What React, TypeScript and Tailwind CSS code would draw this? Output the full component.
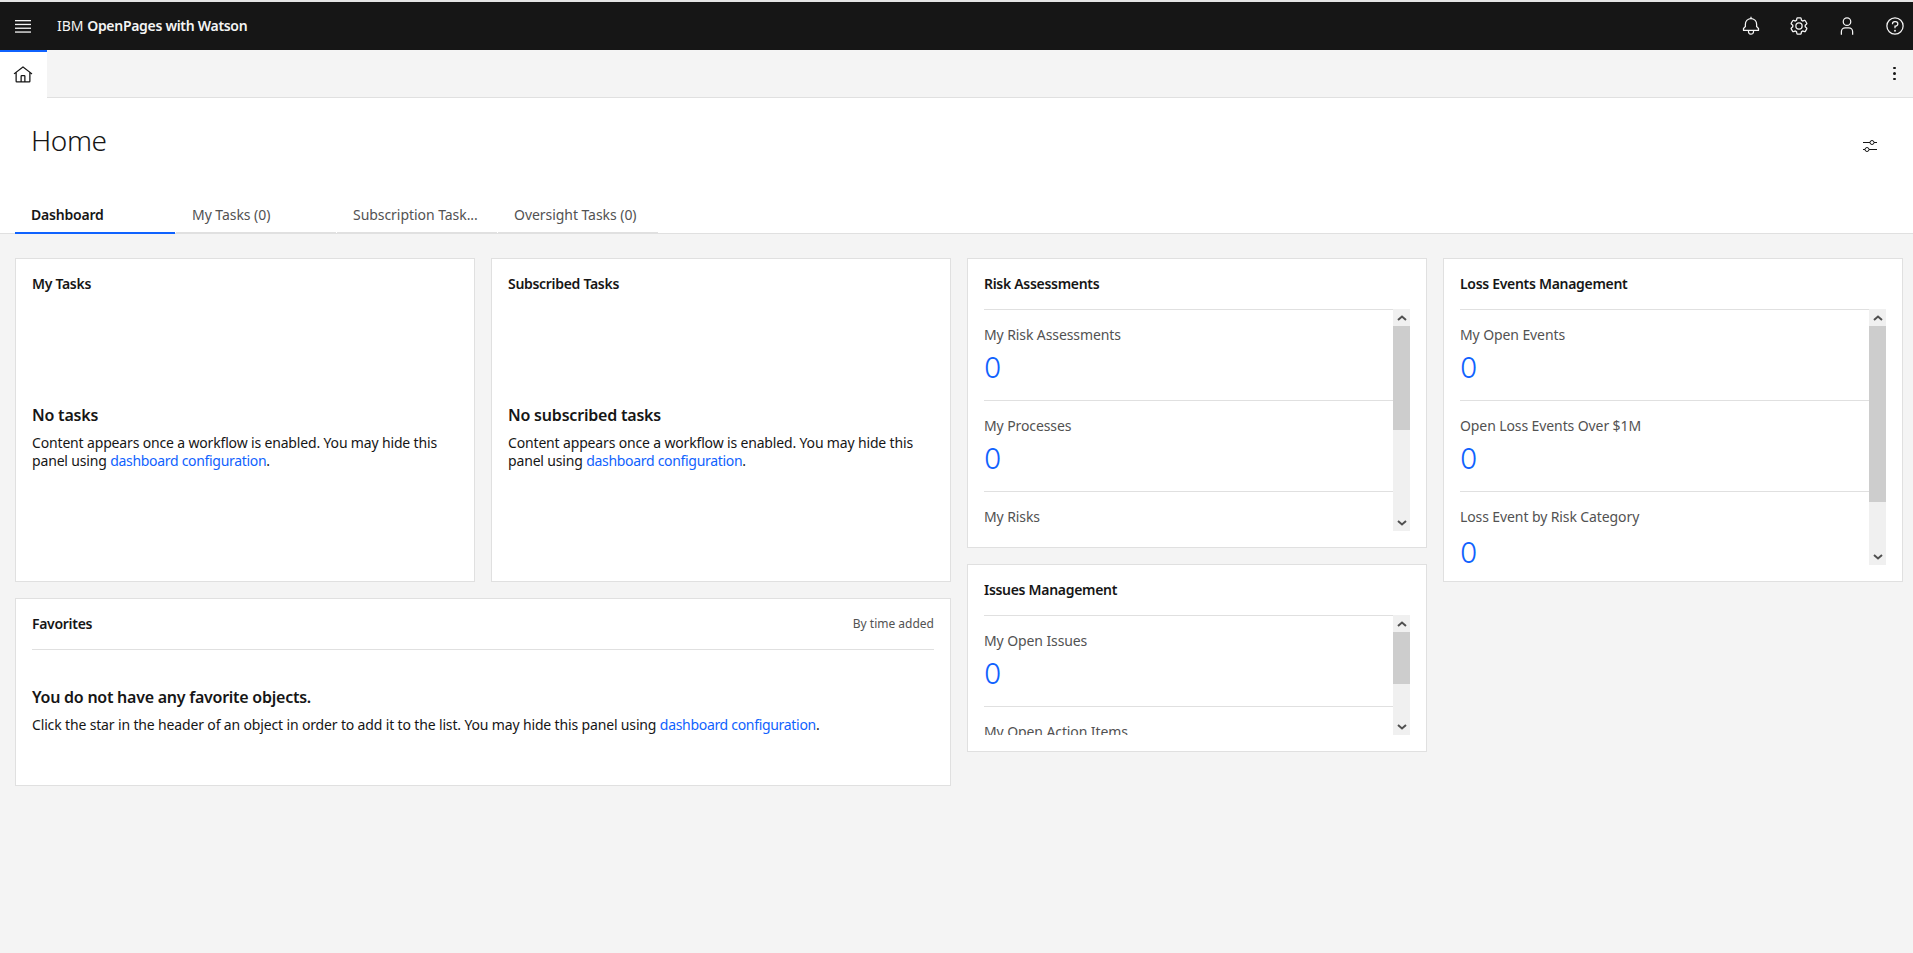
const notificationPath =
  'M28.7071,19.293,26,16.5859V13a10.0136,10.0136,0,0,0-9-9.9492V1H15V3.0508A10.0136,10.0136,0,0,0,6,13v3.5859L3.2929,19.293A1,1,0,0,0,3,20v3a1,1,0,0,0,1,1h7v.7768a5.152,5.152,0,0,0,4.5,5.1987A5.0057,5.0057,0,0,0,21,25V24h7a1,1,0,0,0,1-1V20A1,1,0,0,0,28.7071,19.293ZM19,25a3,3,0,0,1-6,0V24h6Zm8-3H5V20.4141L7.707,17.707A1,1,0,0,0,8,17V13a8,8,0,0,1,16,0v4a1,1,0,0,0,.293.707L27,20.4141Z';
const settingsPaths = [
  'M27,16.76c0-.25,0-.5,0-.76s0-.51,0-.77l1.92-1.68A2,2,0,0,0,29.3,11L26.94,7a2,2,0,0,0-1.73-1,2,2,0,0,0-.64.1l-2.43.82a11.35,11.35,0,0,0-1.31-.75l-.51-2.52a2,2,0,0,0-2-1.61H13.64a2,2,0,0,0-2,1.61l-.51,2.52a11.48,11.48,0,0,0-1.32.75L7.43,6.06A2,2,0,0,0,6.79,6,2,2,0,0,0,5.06,7L2.7,11a2,2,0,0,0,.41,2.51L5,15.24c0,.25,0,.5,0,.76s0,.51,0,.77L3.11,18.45A2,2,0,0,0,2.7,21L5.06,25a2,2,0,0,0,1.73,1,2,2,0,0,0,.64-.1l2.43-.82a11.35,11.35,0,0,0,1.31.75l.51,2.52a2,2,0,0,0,2,1.61h4.72a2,2,0,0,0,2-1.61l.51-2.52a11.48,11.48,0,0,0,1.32-.75l2.42.82a2,2,0,0,0,.64.1,2,2,0,0,0,1.73-1L29.3,21a2,2,0,0,0-.41-2.51ZM25.21,24l-3.43-1.16a8.86,8.86,0,0,1-2.71,1.57L18.36,28H13.64l-.71-3.55a9.36,9.36,0,0,1-2.7-1.57L6.79,24,4.43,20l2.72-2.4a8.9,8.9,0,0,1,0-3.13L4.43,12,6.79,8l3.43,1.16a8.86,8.86,0,0,1,2.71-1.57L13.64,4h4.72l.71,3.55a9.36,9.36,0,0,1,2.7,1.57L25.21,8,27.57,12l-2.72,2.4a8.9,8.9,0,0,1,0,3.13L27.57,20Z',
  'M16,22a6,6,0,1,1,6-6A5.94,5.94,0,0,1,16,22Zm0-10a3.91,3.91,0,0,0-4,4,3.91,3.91,0,0,0,4,4,3.91,3.91,0,0,0,4-4A3.91,3.91,0,0,0,16,12Z',
];
const userPaths = [
  'M16,4a5,5,0,1,1-5,5,5,5,0,0,1,5-5m0-2a7,7,0,1,0,7,7A7,7,0,0,0,16,2Z',
  'M26,30H24V25a5,5,0,0,0-5-5H13a5,5,0,0,0-5,5v5H6V25a7,7,0,0,1,7-7h6a7,7,0,0,1,7,7Z',
];
const helpPaths = [
  'M16,2A14,14,0,1,0,30,16,14,14,0,0,0,16,2Zm0,26A12,12,0,1,1,28,16,12,12,0,0,1,16,28Z',
  'M17,8H15.5A4.49,4.49,0,0,0,11,12.5V13h2v-.5A2.5,2.5,0,0,1,15.5,10H17a2.5,2.5,0,0,1,0,5H15v4.5h2V17a4.5,4.5,0,0,0,0-9Z',
];
const homePath =
  'M16.6123,2.2138a1.01,1.01,0,0,0-1.2427,0L1,13.4194l1.2427,1.5717L4,13.6209V26a2.0041,2.0041,0,0,0,2,2H26a2.0037,2.0037,0,0,0,2-2V13.63L29.7573,15,31,13.4282ZM18,26H14V18h4Zm2,0V18a2.0023,2.0023,0,0,0-2-2H14a2.002,2.002,0,0,0-2,2v8H6V12.0615l10-7.79,10,7.8005V26Z';

function Icon({ paths, children, className }: { paths: string[]; children?: React.ReactNode; className: string }) {
  return (
    <svg viewBox="0 0 32 32" fill="currentColor" className={className}>
      {paths.map((d) => (
        <path key={d} d={d} />
      ))}
      {children}
    </svg>
  );
}

function Scrollbar({ thumb }: { thumb: string }) {
  return (
    <div className="flex w-[17px] shrink-0 flex-col bg-[#f0f0f0]">
      <div className="flex h-[17px] shrink-0 items-center justify-center">
        <svg viewBox="0 0 10 6" className="h-[6px] w-[10px]" fill="none" stroke="#505050" strokeWidth="2">
          <path d="M1 5l4-3.5L9 5" />
        </svg>
      </div>
      <div className={`shrink-0 bg-[#cdcdcd] ${thumb}`} />
      <div className="flex-1" />
      <div className="flex h-[17px] shrink-0 items-center justify-center">
        <svg viewBox="0 0 10 6" className="h-[6px] w-[10px]" fill="none" stroke="#505050" strokeWidth="2">
          <path d="M1 1l4 3.5L9 1" />
        </svg>
      </div>
    </div>
  );
}

function Card({ title, className, children }: { title: string; className: string; children?: React.ReactNode }) {
  return (
    <div className={`flex w-[460px] flex-col border border-[#e0e0e0] bg-white px-4 pt-4 pb-4 ${className}`}>
      <h3 className="text-[14px] leading-[18px] font-semibold tracking-[-0.3px] text-[#161616]">{title}</h3>
      {children}
    </div>
  );
}

function MetricCard({
  title,
  items,
  className,
  listHeight,
  thumb,
  lastLower,
}: {
  title: string;
  items: string[];
  className: string;
  listHeight: string;
  thumb: string;
  lastLower?: boolean;
}) {
  return (
    <Card title={title} className={className}>
      <div className={`mt-4 flex ${listHeight}`}>
        <div className="min-w-0 flex-1 overflow-hidden">
          {items.map((item, i) => (
            <div key={item} className="h-[91px] border-t border-[#e0e0e0] pt-4">
              <div className="text-[14px] leading-[18px] tracking-[-0.1px] text-[#525252]">{item}</div>
              <div
                className={`${lastLower && i === items.length - 1 ? 'mt-[9px]' : 'mt-[6px]'} font-['Inter',sans-serif] text-[28px] leading-[36px] font-light text-[#0f62fe]`}
              >
                0
              </div>
            </div>
          ))}
        </div>
        <Scrollbar thumb={thumb} />
      </div>
    </Card>
  );
}

function ConfigLink() {
  return <a className="tracking-[-0.31px] text-[#0f62fe]">dashboard configuration</a>;
}

function EmptyTasks({ title, heading }: { title: string; heading: string }) {
  return (
    <Card title={title} className="h-[324px]">
      <h4 className="mt-[111px] text-[16px] leading-[22px] font-semibold tracking-[-0.2px] text-[#161616]">{heading}</h4>
      <p className="mt-[8px] text-[14px] leading-[18px] tracking-[-0.16px] text-[#161616]">
        Content appears once a workflow is enabled. You may hide this panel using <ConfigLink />.
      </p>
    </Card>
  );
}

const tabs = ['My Tasks (0)', 'Subscription Task...', 'Oversight Tasks (0)'];

export default function App() {
  return (
    <div className="flex min-h-[953px] flex-col overflow-hidden bg-[#f4f4f4] font-['Noto_Sans',sans-serif] text-[#161616]">
      <header className="flex h-[50px] items-center border-t-2 border-[#e4e4e4] bg-[#161616] text-white">
        <div className="flex w-[46px] justify-center">
          <svg viewBox="0 0 16 13" className="h-[13px] w-4" fill="#f4f4f4">
            <rect y="0" width="16" height="1.3" />
            <rect y="3.8" width="16" height="1.3" />
            <rect y="7.6" width="16" height="1.3" />
            <rect y="11.4" width="16" height="1.3" />
          </svg>
        </div>
        <div className="ml-[11px] text-[14px] leading-[18px] text-[#f4f4f4]">
          IBM <span className="font-semibold tracking-[-0.3px]">OpenPages with Watson</span>
        </div>
        <div className="ml-auto flex gap-7 pr-2 text-[#f4f4f4]">
          <Icon paths={[notificationPath]} className="h-5 w-5" />
          <Icon paths={settingsPaths} className="h-5 w-5" />
          <Icon paths={userPaths} className="h-5 w-5" />
          <Icon paths={helpPaths} className="h-5 w-5">
            <circle cx="16" cy="23.5" r="1.5" />
          </Icon>
        </div>
      </header>

      <div className="flex h-[48px] border-b border-[#e0e0e0] bg-[#f4f4f4]">
        <div className="-mb-px flex w-[47px] items-center justify-center border-t-2 border-[#0f62fe] bg-white pr-[1px]">
          <Icon paths={[homePath]} className="h-5 w-5" />
        </div>
        <div className="ml-auto flex w-[36px] flex-col items-center justify-center gap-[3px] pr-[1px]">
          <span className="h-[2.5px] w-[2.5px] rounded-full bg-[#161616]" />
          <span className="h-[2.5px] w-[2.5px] rounded-full bg-[#161616]" />
          <span className="h-[2.5px] w-[2.5px] rounded-full bg-[#161616]" />
        </div>
      </div>

      <div className="bg-white">
        <div className="flex h-[96px] justify-between">
          <h1 className="pt-[24px] pl-[31px] text-[28px] leading-[36px] font-light tracking-[-0.4px] text-[#161616]">Home</h1>
          <svg viewBox="0 0 16 16" className="mt-[40px] mr-[35px] h-4 w-4" fill="none" stroke="#161616">
            <path d="M1 4.5h7M12 4.5h3M1 11.5h2M7 11.5h8" />
            <circle cx="10" cy="4.5" r="2" />
            <circle cx="5" cy="11.5" r="2" />
          </svg>
        </div>
        <div className="flex h-[40px] gap-px border-b border-[#e0e0e0] pl-[15px] text-[14px] leading-[18px]">
          <div className="-mb-px flex w-[160px] items-center border-b-2 border-[#0f62fe] pt-[4px] pl-4 font-semibold tracking-[-0.2px] text-[#161616]">
            Dashboard
          </div>
          {tabs.map((tab) => (
            <div
              key={tab}
              className="-mb-px flex w-[160px] items-center border-b-2 border-[#e0e0e0] pt-[4px] pl-4 tracking-[-0.05px] text-[#525252]"
            >
              {tab}
            </div>
          ))}
        </div>
      </div>

      <main className="flex gap-4 pt-[24px] pl-[15px]">
        <div className="flex w-[936px] flex-col gap-4">
          <div className="flex gap-4">
            <EmptyTasks title="My Tasks" heading="No tasks" />
            <EmptyTasks title="Subscribed Tasks" heading="No subscribed tasks" />
          </div>
          <div className="flex h-[188px] flex-col border border-[#e0e0e0] bg-white px-4 pt-4">
            <div className="flex items-center justify-between">
              <h3 className="text-[14px] leading-[18px] font-semibold tracking-[-0.3px] text-[#161616]">Favorites</h3>
              <span className="text-[12px] leading-[18px] text-[#525252]">By time added</span>
            </div>
            <div className="mt-4 border-t border-[#e0e0e0] pt-9">
              <h4 className="text-[16px] leading-[22px] font-semibold tracking-[-0.25px] text-[#161616]">
                You do not have any favorite objects.
              </h4>
              <p className="mt-[8px] text-[14px] leading-[18px] tracking-[-0.15px] text-[#161616]">
                Click the star in the header of an object in order to add it to the list. You may hide this panel using{' '}
                <ConfigLink />.
              </p>
            </div>
          </div>
        </div>

        <div className="flex flex-col gap-4">
          <MetricCard
            title="Risk Assessments"
            items={['My Risk Assessments', 'My Processes', 'My Risks']}
            className="h-[290px]"
            listHeight="h-[222px]"
            thumb="h-[104px]"
          />
          <MetricCard
            title="Issues Management"
            items={['My Open Issues', 'My Open Action Items']}
            className="h-[188px]"
            listHeight="h-[120px]"
            thumb="h-[52px]"
          />
        </div>

        <MetricCard
          title="Loss Events Management"
          items={['My Open Events', 'Open Loss Events Over $1M', 'Loss Event by Risk Category']}
          className="h-[324px]"
          listHeight="h-[256px]"
          thumb="h-[176px]"
          lastLower
        />
      </main>
    </div>
  );
}
